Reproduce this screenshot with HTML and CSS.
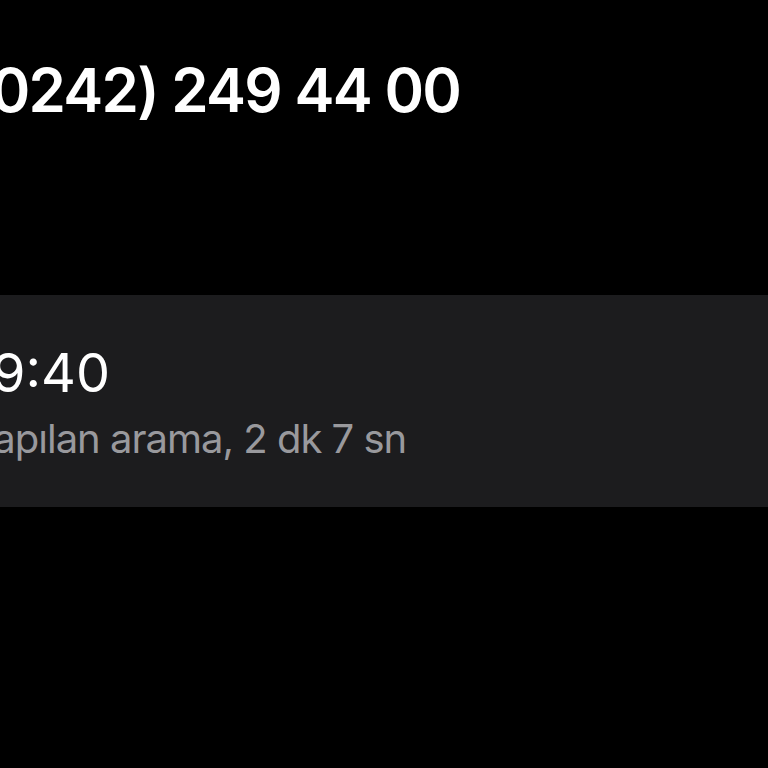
FILE: index.html
```html
<!DOCTYPE html>
<html lang="tr">
<head>
<meta charset="utf-8">
<link rel="stylesheet" href="styles.css">
</head>
<body>
<main class="screen">
  <h1 class="number">(0242) 249 44 00</h1>
  <section class="card">
    <div class="time">19:40</div>
    <div class="detail">Yapılan arama, 2 dk 7 sn</div>
  </section>
</main>
</body>
</html>
```
FILE: styles.css
```css
html, body {
  margin: 0;
  padding: 0;
  background: #000;
  width: 768px;
  height: 768px;
  overflow: hidden;
}
.screen {
  display: flex;
  flex-direction: column;
  font-family: Inter, "Noto Sans", sans-serif;
  color: #fff;
}
.number {
  margin: 0 0 0 -30px;
  padding-top: 52px;
  font-size: 60px;
  font-weight: 600;
  line-height: 76px;
  letter-spacing: -1.7px;
}
.card {
  margin-top: 167px;
  background: #1c1c1e;
  height: 212px;
  padding-top: 46px;
  box-sizing: border-box;
}
.time {
  margin-left: -30px;
  font-size: 54px;
  line-height: 64px;
  font-weight: 400;
}
.detail {
  margin: 10px 0 0 -30px;
  font-size: 40px;
  line-height: 48px;
  letter-spacing: -1px;
  color: #99999d;
}
```
